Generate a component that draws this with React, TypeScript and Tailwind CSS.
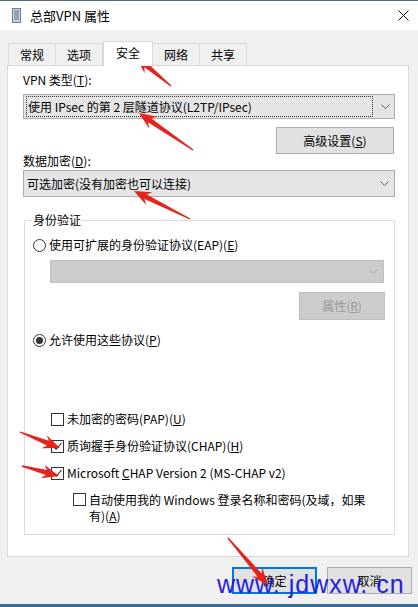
import React from "react";

const font = "font-['Noto_Sans_CJK_SC',sans-serif]";

function Chevron({ color = "#5f5f5f" }: { color?: string }) {
  return (
    <svg width="9" height="5" viewBox="0 0 9 5" className="shrink-0">
      <path d="M0.5 0.5 L4.5 4.5 L8.5 0.5" fill="none" stroke={color} strokeWidth="1" />
    </svg>
  );
}

function Radio({ checked }: { checked?: boolean }) {
  return (
    <span className="w-[13px] h-[13px] rounded-full border border-[#333] bg-white flex items-center justify-center shrink-0">
      {checked && <span className="w-[7px] h-[7px] rounded-full bg-[#333]" />}
    </span>
  );
}

function Check({ checked }: { checked?: boolean }) {
  return (
    <span className="w-[13px] h-[13px] border border-[#333] bg-white flex items-center justify-center shrink-0">
      {checked && (
        <svg width="11" height="11" viewBox="0 0 11 11">
          <path d="M1.5 5.5 L4.2 8.3 L9.5 2" fill="none" stroke="#222" strokeWidth="1.1" />
        </svg>
      )}
    </span>
  );
}

// red annotation arrows drawn over the screenshot
const arrows: [number, number, number, number][] = [
  [171, 86, 136, 57],
  [193, 150, 139, 113],
  [190, 219, 134, 191],
  [20, 432, 60, 448],
  [22, 466, 59, 476],
  [228, 538, 268, 585],
];

function arrowPoints(x1: number, y1: number, x2: number, y2: number) {
  const dx = x2 - x1, dy = y2 - y1;
  const L = Math.hypot(dx, dy);
  const ux = dx / L, uy = dy / L;
  const nx = -uy, ny = ux;
  const hl = 15;
  const bx = x2 - ux * hl, by = y2 - uy * hl;
  const p = (x: number, y: number) => `${x.toFixed(1)},${y.toFixed(1)}`;
  return [
    p(x1 + nx * 0.7, y1 + ny * 0.7),
    p(bx + nx * 2.6 + ux * 2, by + ny * 2.6 + uy * 2),
    p(bx + nx * 7 - ux * 2, by + ny * 7 - uy * 2),
    p(x2, y2),
    p(bx - nx * 7 - ux * 2, by - ny * 7 - uy * 2),
    p(bx - nx * 2.6 + ux * 2, by - ny * 2.6 + uy * 2),
    p(x1 - nx * 0.7, y1 - ny * 0.7),
  ].join(" ");
}

export default function App() {
  const tabs = ["常规", "选项", "安全", "网络", "共享"];

  return (
    <div className={`relative w-[418px] h-[607px] overflow-hidden bg-[#f0f0f0] text-[12px] leading-[16px] text-black ${font}`}>
      <div className="h-px bg-[#51677a]" />

      {/* Title bar */}
      <div className="h-[29px] bg-white flex items-center">
        <svg width="9" height="15" viewBox="0 0 9 15" className="ml-[12px]">
          <rect x="0.5" y="0.5" width="8" height="14" fill="#c9d3df" stroke="#6b7d93" />
          <path d="M2 3h5M2 5h5M2 7h5M2 9h5M2 11h5" stroke="#5a6e88" strokeWidth="1" />
        </svg>
        <span className="ml-[9px] text-[13px]">总部VPN 属性</span>
        <svg width="11" height="11" viewBox="0 0 11 11" className="ml-auto mr-[9px]">
          <path d="M0.5 0.5 L10.5 10.5 M10.5 0.5 L0.5 10.5" stroke="#111" strokeWidth="1" />
        </svg>
      </div>

      {/* Tabs */}
      <div className="mt-[11px] ml-[8px] h-[24px] flex items-end relative z-10">
        {tabs.map((t) => {
          const active = t === "安全";
          return (
            <div
              key={t}
              className={
                active
                  ? "w-[50px] h-[25px] -mb-px bg-white border border-b-0 border-[#d9d9d9] flex items-center justify-center pb-[2px]"
                  : "w-[48px] h-[22px] bg-[#f0f0f0] border border-b-0 border-[#d9d9d9] -ml-px first:ml-0 flex items-center justify-center"
              }
            >
              {t}
            </div>
          );
        })}
      </div>

      {/* Tab panel */}
      <div className="ml-[7px] w-[402px] h-[492px] bg-white border border-[#d9d9d9] px-[15px] flex flex-col">
        <div className="mt-[6px]">
          VPN 类型(<u>T</u>):
        </div>
        <div className="mt-[6px] w-[372px] h-[25px] bg-[#e5e5e5] border border-[#adadad] flex items-center pl-[2px] pr-[4px]">
          <div className="flex-1 h-[21px] border border-dotted border-[#333] flex items-center pl-px">
            使用 IPsec 的第 2 层隧道协议(L2TP/IPsec)
          </div>
          <span className="ml-[8px]">
            <Chevron />
          </span>
        </div>
        <div className="mt-[8px] self-end mr-[-1px] w-[118px] h-[27px] bg-[#e1e1e1] border border-[#adadad] flex items-center justify-center">
          高级设置(<u>S</u>)
        </div>
        <div className="leading-[14px] h-[14px]">
          数据加密(<u>D</u>):
        </div>
        <div className="mt-[2px] w-[372px] h-[27px] bg-[#e5e5e5] border border-[#adadad] flex items-center pl-[3px] pr-[5px]">
          <span className="flex-1">可选加密(没有加密也可以连接)</span>
          <Chevron />
        </div>

        <fieldset className="mt-[15px] ml-px w-[371px] h-[323px] border border-[#dcdcdc] px-0">
          <legend className="ml-[7px] px-px">身份验证</legend>
          <div className="mt-[9px] ml-[8px] flex items-center gap-[3px]">
            <Radio />
            <span>
              使用可扩展的身份验证协议(EAP)(<u>E</u>)
            </span>
          </div>
          <div className="mt-[7px] ml-[25px] w-[334px] h-[23px] bg-[#cccccc] border border-[#bfbfbf] flex items-center justify-end pr-[5px]">
            <Chevron color="#a8a8a8" />
          </div>
          <div className="mt-[9px] ml-[274px] w-[86px] h-[28px] bg-[#cccccc] border border-[#bfbfbf] flex items-center justify-center text-[#9a9a9a]">
            属性(<u>R</u>)
          </div>
          <div className="mt-[12px] ml-[8px] flex items-center gap-[3px]">
            <Radio checked />
            <span>
              允许使用这些协议(<u>P</u>)
            </span>
          </div>

          <div className="mt-[63px] ml-[26px] flex flex-col gap-[11px]">
            <div className="flex items-center gap-[3px]">
              <Check />
              <span>
                未加密的密码(PAP)(<u>U</u>)
              </span>
            </div>
            <div className="flex items-center gap-[3px]">
              <Check checked />
              <span>
                质询握手身份验证协议(CHAP)(<u>H</u>)
              </span>
            </div>
            <div className="flex items-center gap-[3px]">
              <Check checked />
              <span>
                Microsoft <u>C</u>HAP Version 2 (MS-CHAP v2)
              </span>
            </div>
            <div className="ml-[22px] flex items-start gap-[3px]">
              <span className="mt-px">
                <Check />
              </span>
              <span>
                自动使用我的 Windows 登录名称和密码(及域，如果
                <br />
                有)(<u>A</u>)
              </span>
            </div>
          </div>
        </fieldset>
      </div>

      {/* Dialog buttons */}
      <div className="mt-[10px] mr-[6px] flex justify-end gap-[10px]">
        <div className="w-[85px] h-[27px] bg-[#e1e1e1] border-2 border-[#0078d7] flex items-center justify-center">
          确定
        </div>
        <div className="w-[85px] h-[27px] bg-[#e1e1e1] border border-[#adadad] flex items-center justify-center">
          取消
        </div>
      </div>

      <div className="absolute left-0 right-0 bottom-0 h-[3px] bg-[#3a6f98]" />

      {/* Watermark */}
      <div className="absolute left-[217px] top-[570px] font-['Liberation_Sans',sans-serif] text-[25px] leading-[28px] tracking-[1px] text-[#1f1fe0] whitespace-nowrap">
        www. jdwxw. cn
      </div>

      {/* Annotation arrows */}
      <svg className="absolute inset-0 pointer-events-none" width="418" height="607" viewBox="0 0 418 607">
        {arrows.map(([x1, y1, x2, y2], i) => (
          <polygon key={i} points={arrowPoints(x1, y1, x2, y2)} fill="#e3251b" />
        ))}
      </svg>
    </div>
  );
}
